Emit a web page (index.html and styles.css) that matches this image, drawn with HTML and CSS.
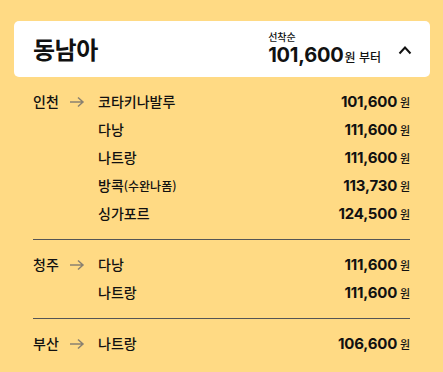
FILE: index.html
```html
<!DOCTYPE html>
<html lang="ko">
<head>
<meta charset="utf-8">
<link rel="stylesheet" href="styles.css">
</head>
<body>
<div class="page">
  <div class="card">
    <div class="card-title">동남아</div>
    <div class="card-right">
      <div class="price-box">
        <div class="first">선착순</div>
        <div class="from"><span class="big">101,600</span><span class="unit">원 부터</span></div>
      </div>
      <svg class="chev" width="14" height="10" viewBox="0 0 14 10"><path d="M1.5 8.5 L7 2.5 L12.5 8.5" fill="none" stroke="#111" stroke-width="2"/></svg>
    </div>
  </div>

  <div class="group">
    <div class="origin">인천<svg class="arrow" width="16" height="12" viewBox="0 0 16 12"><path d="M1 6 H14 M9 1.5 L14 6 L9 10.5" fill="none" stroke="#8a8170" stroke-width="1.5"/></svg></div>
    <div class="dests">
      <div class="row"><span class="dest">코타키나발루</span><span class="price">101,600<span class="won">원</span></span></div>
      <div class="row"><span class="dest">다낭</span><span class="price">111,600<span class="won">원</span></span></div>
      <div class="row"><span class="dest">나트랑</span><span class="price">111,600<span class="won">원</span></span></div>
      <div class="row"><span class="dest">방콕<small>(수완나폼)</small></span><span class="price">113,730<span class="won">원</span></span></div>
      <div class="row"><span class="dest">싱가포르</span><span class="price">124,500<span class="won">원</span></span></div>
    </div>
  </div>
  <div class="group">
    <div class="origin">청주<svg class="arrow" width="16" height="12" viewBox="0 0 16 12"><path d="M1 6 H14 M9 1.5 L14 6 L9 10.5" fill="none" stroke="#8a8170" stroke-width="1.5"/></svg></div>
    <div class="dests">
      <div class="row"><span class="dest">다낭</span><span class="price">111,600<span class="won">원</span></span></div>
      <div class="row"><span class="dest">나트랑</span><span class="price">111,600<span class="won">원</span></span></div>
    </div>
  </div>
  <div class="group">
    <div class="origin">부산<svg class="arrow" width="16" height="12" viewBox="0 0 16 12"><path d="M1 6 H14 M9 1.5 L14 6 L9 10.5" fill="none" stroke="#8a8170" stroke-width="1.5"/></svg></div>
    <div class="dests">
      <div class="row"><span class="dest">나트랑</span><span class="price">106,600<span class="won">원</span></span></div>
    </div>
  </div>
</div>
</body>
</html>
```

FILE: styles.css
```css
* { box-sizing: border-box; }
html, body { margin: 0; padding: 0; }
body {
  background: #ffda84;
  font-family: Inter, "Noto Sans CJK KR", sans-serif;
  color: #111;
  width: 443px;
  height: 372px;
  overflow: hidden;
}
.page { padding: 21px 13px 0 14px; }
.card {
  background: #fff;
  border-radius: 5px;
  height: 56px;
  display: flex;
  align-items: center;
  justify-content: space-between;
  padding: 0 18px 0 19px;
}
.card-title {
  font-family: "Noto Sans CJK KR", sans-serif;
  font-size: 24px;
  font-weight: 700;
  letter-spacing: -0.5px;
  margin-top: -2px;
}
.card-right { display: flex; align-items: center; gap: 17px; }
.price-box { display: flex; flex-direction: column; padding-top: 2px; }
.first {
  font-family: "Noto Sans CJK KR", sans-serif;
  font-size: 10px;
  font-weight: 500;
  line-height: 12px;
}
.from { display: flex; align-items: baseline; line-height: 24px; }
.big { font-size: 20px; font-weight: 700; letter-spacing: -0.2px; }
.unit {
  font-family: "Noto Sans CJK KR", sans-serif;
  font-size: 12px;
  font-weight: 500;
  margin-left: 1px;
}
.chev { display: block; margin-top: 2px; }

.group {
  display: flex;
  margin: 0 20px 0 19px;
  padding: 10px 0 12px;
  border-bottom: 1px solid #555;
}
.group:first-of-type { padding-top: 9px; }
.group:last-child { border-bottom: none; }
.origin {
  width: 65px;
  flex: none;
  display: flex;
  align-items: center;
  height: 28px;
  font-family: "Noto Sans CJK KR", sans-serif;
  font-size: 14px;
  font-weight: 500;
  gap: 10px;
}
.arrow { display: block; margin-top: 1px; }
.dests { flex: 1; }
.row {
  display: flex;
  justify-content: space-between;
  align-items: center;
  height: 28px;
}
.dest {
  font-family: "Noto Sans CJK KR", sans-serif;
  font-size: 14px;
  font-weight: 500;
}
.dest small { font-size: 12px; }
.price { font-size: 15px; font-weight: 700; letter-spacing: -0.2px; display: flex; align-items: baseline; }
.won {
  font-family: "Noto Sans CJK KR", sans-serif;
  font-size: 11px;
  font-weight: 500;
  margin-left: 3px;
}
```
